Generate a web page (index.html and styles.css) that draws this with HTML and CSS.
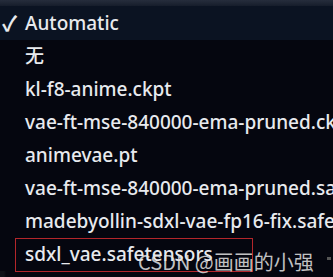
FILE: index.html
```html
<!DOCTYPE html>
<html>
<head>
<meta charset="utf-8">
<link rel="stylesheet" href="styles.css">
</head>
<body>
<div class="screen">
  <div class="edge"></div>
  <ul class="menu">
    <li class="item selected"><span class="check">✓</span>Automatic</li>
    <li class="item">无</li>
    <li class="item">kl-f8-anime.ckpt</li>
    <li class="item">vae-ft-mse-840000-ema-pruned.ckpt</li>
    <li class="item">animevae.pt</li>
    <li class="item">vae-ft-mse-840000-ema-pruned.safetensors</li>
    <li class="item">madebyollin-sdxl-vae-fp16-fix.safetensors</li>
    <li class="item">sdxl_vae.safetensors</li>
  </ul>
  <div class="redbox"></div>
  <div class="watermark">CSDN @画画的小强</div>
  <div class="dot"></div>
</div>
</body>
</html>
```
FILE: styles.css
```css
html, body {
  margin: 0;
  padding: 0;
  background: #05060f;
  overflow: hidden;
}
.screen {
  position: relative;
  width: 333px;
  height: 277px;
  overflow: hidden;
  background: linear-gradient(90deg, #0e1118 0, #0e1118 4px, #05060f 6px);
  font-family: "Noto Sans", "Noto Sans CJK SC", sans-serif;
}
.edge {
  height: 6px;
  background: linear-gradient(#262d3c, #161d2b);
}
.menu {
  list-style: none;
  margin: 0;
  padding: 0;
  background: #05060f;
}
.item {
  position: relative;
  height: 33px;
  line-height: 33px;
  padding-left: 25px;
  font-size: 19px;
  font-weight: 500;
  color: #e8eaee;
  white-space: nowrap;
  overflow: hidden;
}
.item.selected {
  height: 34px;
  line-height: 34px;
  background: #0b1322;
}
.check {
  position: absolute;
  left: 2px;
  top: 0;
  font-size: 21px;
  font-weight: 600;
  color: #e8eaee;
}
.redbox {
  position: absolute;
  left: 15px;
  top: 238px;
  width: 236px;
  height: 32px;
  border: 1.5px solid #b3262b;
}
.watermark {
  position: absolute;
  left: 138px;
  top: 247px;
  font-size: 20px;
  line-height: 30px;
  color: rgba(228, 228, 228, 0.85);
  font-family: "Noto Sans CJK SC", sans-serif;
  white-space: nowrap;
}
.dot {
  position: absolute;
  left: 327px;
  top: 257px;
  width: 4px;
  height: 3px;
  background: #555;
}
```
